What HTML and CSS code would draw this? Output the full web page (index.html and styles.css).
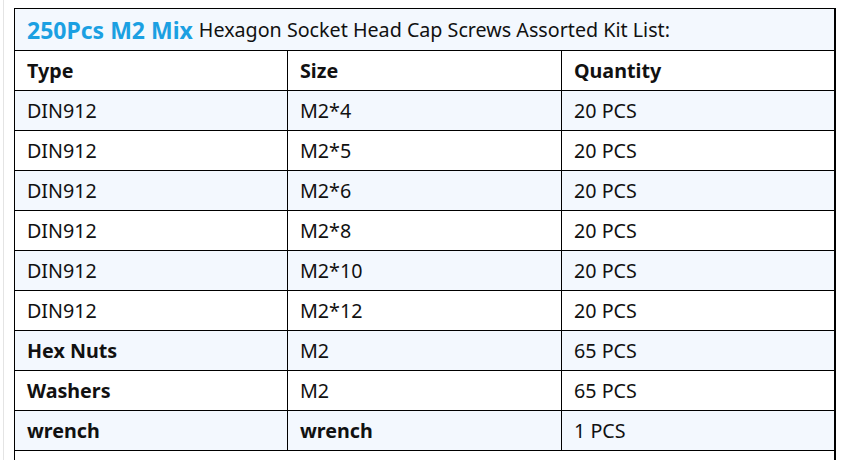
FILE: index.html
```html
<!DOCTYPE html>
<html>
<head>
<meta charset="utf-8">
<link rel="stylesheet" href="styles.css">
</head>
<body>
<div class="frame">
  <div class="sheet">
    <div class="title"><span class="hl">250Pcs M2 Mix</span> Hexagon Socket Head Cap Screws Assorted Kit List:</div>
    <div class="row head"><div class="cell b">Type</div><div class="cell b">Size</div><div class="cell b">Quantity</div></div>
    <div class="row alt"><div class="cell">DIN912</div><div class="cell">M2*4</div><div class="cell">20 PCS</div></div>
    <div class="row"><div class="cell">DIN912</div><div class="cell">M2*5</div><div class="cell">20 PCS</div></div>
    <div class="row alt"><div class="cell">DIN912</div><div class="cell">M2*6</div><div class="cell">20 PCS</div></div>
    <div class="row"><div class="cell">DIN912</div><div class="cell">M2*8</div><div class="cell">20 PCS</div></div>
    <div class="row alt"><div class="cell">DIN912</div><div class="cell">M2*10</div><div class="cell">20 PCS</div></div>
    <div class="row"><div class="cell">DIN912</div><div class="cell">M2*12</div><div class="cell">20 PCS</div></div>
    <div class="row alt"><div class="cell b">Hex Nuts</div><div class="cell">M2</div><div class="cell">65 PCS</div></div>
    <div class="row"><div class="cell b">Washers</div><div class="cell">M2</div><div class="cell">65 PCS</div></div>
    <div class="row alt"><div class="cell b">wrench</div><div class="cell b">wrench</div><div class="cell">1 PCS</div></div>
    <div class="tail"></div>
  </div>
</div>
</body>
</html>
```
FILE: styles.css
```css
html, body {
  margin: 0;
  padding: 0;
  background: #ffffff;
  overflow: hidden;
}
body {
  font-family: "Noto Sans", "Noto Sans CJK SC", sans-serif;
  color: #111;
}
.frame {
  margin-left: 3px;
  border-left: 1px solid #e4e4e4;
  padding-left: 10px;
  padding-top: 8px;
  height: 460px;
  box-sizing: border-box;
}
.sheet {
  width: 822px;
  box-sizing: border-box;
  border-top: 1px solid #000;
  border-left: 1px solid #000;
  border-right: 2px solid #000;
  height: 460px;
}
.title {
  height: 41px;
  border-bottom: 1px solid #000;
  background: #f3f8fe;
  display: flex;
  align-items: center;
  padding-left: 12px;
  font-size: 19.7px;
  white-space: nowrap;
}
.hl {
  color: #1ba0e2;
  font-weight: 700;
  font-size: 23px;
  margin-right: 6px;
}
.row {
  display: grid;
  grid-template-columns: 273px 274px 272px;
  height: 40px;
}
.row.alt {
  background: #f3f8fe;
}
.cell {
  border-bottom: 1px solid #000;
  border-right: 1px solid #000;
  display: flex;
  align-items: center;
  padding-left: 12px;
  font-size: 19.7px;
  white-space: nowrap;
}
.cell:last-child {
  border-right: none;
}
.b {
  font-weight: 700;
}
.tail {
  height: 10px;
}
```
